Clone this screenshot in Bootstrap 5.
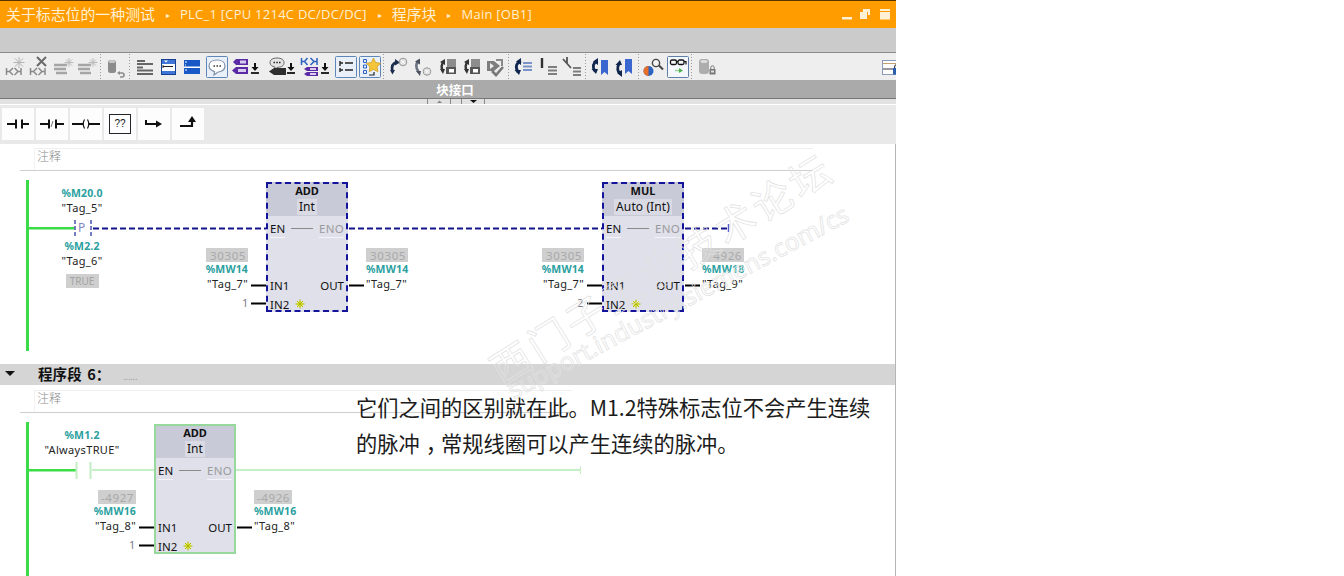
<!DOCTYPE html>
<html lang="zh-CN">
<head>
<meta charset="utf-8">
<title>关于标志位的一种测试</title>
<link href="https://cdn.jsdelivr.net/npm/bootstrap@5.3.0/dist/css/bootstrap.min.css" rel="stylesheet">
<style>
html,body{height:576px;overflow:hidden;background:#fff}
body{font-family:"Noto Sans","Noto Sans CJK SC",sans-serif;font-size:11px;color:#111}
.tia-app{width:896px;height:576px;overflow:hidden}
.tia-title{height:28px;background:#ff9c00;border-top:1px solid #5a3300;color:#fff0d6;padding-left:6px}
.tia-title .cn{font-family:"Noto Sans CJK SC",sans-serif;font-size:14.9px;white-space:nowrap}
.tia-title .en{font-family:"Open Sans",sans-serif;font-size:13px;white-space:nowrap;letter-spacing:.25px}
.tia-title .arr{font-size:8px;width:12px;text-align:center;margin:0 6px 0 7px}
.tia-winbtns{margin-right:5px}
.tia-gray{height:24px;background:#cbcbcb;border-bottom:1px solid #8a8a8a;box-sizing:content-box}
.tia-tools{height:27px;background:#eeeeee}
.tia-iface{height:18px;background:#aaaaaa;color:#fff;font:700 12.5px "Noto Sans CJK SC",sans-serif;padding-left:14px}
.tia-strip{height:7px;background:#e2e2e2;border-top:1px solid #777;border-bottom:1px solid #fff}
.tia-instr{height:39px;background:#e9e9e9;padding:3px 0 0 2px;gap:2px}
.tia-ibtn{width:32px;height:32px;background:#fdfdfd}
.tia-q{font:10px "Liberation Sans",sans-serif}
.tia-body{height:432px;border-right:1px solid #b5b5b5;background:#fff}
.tia-cmtrow{padding-left:20px}
.tia-cmt{border-bottom:1px solid #cfcfcf;height:23px;width:793px}
.tia-cmt2{width:552px;height:23px}
.tia-cmt span{display:block;margin-left:14px;height:22px;border-top:1px solid #efefef;border-left:1px solid #f3f3f3;padding:0 0 0 2px;font:300 12px/13px "Noto Sans CJK SC",sans-serif;color:#8a8a8a}
.tia-r1{height:27px;padding-top:4px}
.tia-r2{height:28px;padding-top:5px}
.tia-canvas{height:193px}
.tia-canvas2{height:163px}
.tia-wires{position:absolute;left:0;top:0}
.tia-head{height:21px;background:#d5d5d5;padding-left:6px;padding-bottom:2px}
.tia-head b{font:700 14.5px "Noto Sans CJK SC",sans-serif;margin-left:23px;word-spacing:2px;letter-spacing:.1px}
.tia-head i{color:#8c8c8c;font-style:normal;font-size:8px;margin-left:13px;letter-spacing:.2px;padding-top:6px}
.tia-tri{width:0;height:0;border-left:5.5px solid transparent;border-right:5.5px solid transparent;border-top:5.5px solid #111;margin-left:-1px}
.tia-node{position:absolute;white-space:nowrap;line-height:15px;font-size:11px;letter-spacing:.35px;color:#222}
.tia-opr{align-items:flex-start}
.tia-opl{align-items:flex-end}
.tia-val{width:42px;height:14px;background:#cfcfcf;color:#a9a9a9;text-align:right;padding-right:2px;line-height:15px;letter-spacing:.6px;font-size:11.5px}
.tia-val4{width:38px}
.tia-addr{color:#2aa0a0;font-weight:700;font-size:10.5px;letter-spacing:.15px;line-height:14px}
.tia-true{background:#cfcfcf;color:#a4a4a4;font-size:10px;width:33px;height:14px;text-align:center;line-height:14px;letter-spacing:0;margin-top:6px}
.tia-one{color:#7a7a86}
.tia-block{position:absolute;width:82px;height:130px;background:#dfe0ea;font-size:11.5px;line-height:15px;letter-spacing:0;color:#111}
.tia-sel{outline:2px dashed #14149a;outline-offset:-2px}
.tia-run{border:2px solid #97d99c}
.tia-run .tia-bhead{height:32px;padding-top:0}
.tia-bhead{height:34px;background:#c9cad7;padding-top:2px}
.tia-bname{font-weight:700;line-height:14px;font-size:11px}
.tia-btype{background:#d9dae3;padding:0 2px;height:16px;line-height:15px;margin-top:1px;font-size:12px;letter-spacing:.1px}
.tia-en{height:18px;padding:0 4px;margin-top:3px}
.tia-en span{border-bottom:1px solid #f4f4f8;height:19px;line-height:20px}
.tia-en .tia-eno{color:#9b9b9b;letter-spacing:.3px}
.tia-en hr{flex:1;margin:0 6px;border:0;border-top:1px solid #8a8a8a;opacity:1;height:0}
.tia-pins{padding:0 4px;height:19px;flex:none}
.tia-pins:last-child{margin-bottom:-1px;height:18px}
.tia-run .tia-en{padding:0 2px}
.tia-run .tia-pins{padding:0 2px}
.tia-run .tia-pins:last-child{margin-bottom:-3px}
.tia-star{margin-left:6px;margin-bottom:1px}
.tia-pct{position:absolute;left:356px;top:389px;font:400 21.25px/36px "Noto Sans CJK SC",sans-serif;color:#1c1c1c;white-space:nowrap}
.tia-cm{letter-spacing:-6px;padding-left:6px}
.tia-mark{position:absolute;white-space:nowrap;color:transparent;-webkit-text-stroke:.7px #e2e2e2;pointer-events:none}
.tia-m1{left:461px;top:244px;width:400px;text-align:center;font:40px/46px "Noto Sans CJK SC",sans-serif;letter-spacing:4px;transform:rotate(-32deg)}
.tia-m2{left:478px;top:287px;width:400px;text-align:center;font:24.5px/30px "Noto Sans",sans-serif;transform:rotate(-28deg)}
</style>
</head>
<body>
<svg width="0" height="0" class="position-absolute">
<defs>
<symbol id="k-star" viewBox="0 0 24 24"><path d="M16 2v11M10.500 7.500h11M12 3.500l8 8M20 3.500l-8 8" stroke="#b4b4b4" stroke-width="1" fill="none"/></symbol>
<symbol id="k-h" viewBox="0 0 24 24"><path d="M3.500 13v7M3.500 16.500h3M10 13l-3.500 3.500L10 20M18 13v7M18 16.500h-3M11.500 13l3.500 3.500-3.500 3.500" stroke="#8a8a8a" stroke-width="1.500" fill="none"/></symbol>
<symbol id="i-bars" viewBox="0 0 24 24"><path d="M3 10h13M3 14h12M5 18h11" stroke="#a5a5a5" stroke-width="2.500"/><path d="M18 3v9M13.500 7.500h9M15 4.500l6 6M21 4.500l-6 6" stroke="#bbb" stroke-width="1"/></symbol>
<symbol id="i-db" viewBox="0 0 24 24"><rect x="5" y="5" width="8" height="13" rx="2.500" fill="#8c8c8c"/><ellipse cx="9" cy="6.500" rx="3.500" ry="1.500" fill="#c8c8c8"/><path d="M15 18h4a2 2 0 0 1 0 4h-2" stroke="#8c8c8c" stroke-width="1.600" fill="none"/><path d="M17 16l-3 2 3 2z" fill="#8c8c8c"/></symbol>
<symbol id="i-list" viewBox="0 0 24 24"><path d="M4 6h8M4 9h16M4 12.500h6M4 15.500h16M4 19h16" stroke="#666" stroke-width="2"/></symbol>
<symbol id="i-ba" viewBox="0 0 24 24"><rect x="5.500" y="4.500" width="14" height="15" fill="#fff" stroke="#17418f"/><rect x="6" y="5" width="13" height="4" fill="#3f76d8"/><rect x="6" y="16" width="13" height="3" fill="#3f76d8"/><path d="M8 5.500l2 2 2-2z" fill="#fff"/><path d="M7 10v3M7 11.500h10" stroke="#222" fill="none"/></symbol>
<symbol id="i-bb" viewBox="0 0 24 24"><rect x="4" y="5" width="16" height="14" fill="#1757c6"/><rect x="4" y="11.500" width="16" height="1.500" fill="#fff"/><path d="M5 7h2M5 10h1M5 15h2" stroke="#fff" fill="none"/></symbol>
<symbol id="i-bub" viewBox="0 0 24 24"><path d="M12 5c5 0 8 2.500 8 6s-3 6-7 6l-4 3 .5-3.400C6 15.500 4 13.500 4 11c0-3.500 3-6 8-6z" fill="#fff" stroke="#7f8fa8" stroke-width="1.200"/><path d="M8.500 11h1.500M11.500 11H13M14.500 11H16" stroke="#333" stroke-width="1.600"/></symbol>
<symbol id="i-tag" viewBox="0 0 24 24"><path d="M8 4h12v6H8l-3-3z" fill="#5b2aa5"/><rect x="12" y="5.500" width="6" height="3" fill="#d8cdf0"/><path d="M8 12h12v7H8l-4-3.500z" fill="#5b2aa5"/><rect x="10" y="14" width="8" height="3" fill="#d8cdf0"/></symbol>
<symbol id="i-dl" viewBox="0 0 24 24"><path d="M12 7v5" stroke="#111" stroke-width="2"/><path d="M8.500 11h7L12 15z" fill="#111"/><path d="M8 17h8" stroke="#111" stroke-width="1.800"/></symbol>
<symbol id="i-bt" viewBox="0 0 24 24"><path d="M12 3c4.500 0 7 1.800 7 4.700 0 3-2.500 4.500-6 4.500l-3 2V12C7 11.500 5 10 5 7.700 5 4.800 7.500 3 12 3z" fill="#e4e4e4" stroke="#666"/><path d="M8.500 7.500h1.500M11.300 7.500h1.500M14 7.500h1.500" stroke="#222" stroke-width="1.500"/><path d="M9 13h12v7H9l-5-3.500z" fill="#2e2e2e"/></symbol>
<symbol id="i-kt" viewBox="0 0 24 24"><path d="M3.500 3v7M3.500 6.500h3M9.500 3l-3 3.500 3 3.500M19 3v7M19 6.500h-3M12.500 3l3.500 3.500-3.500 3.500" stroke="#2c62c0" stroke-width="1.500" fill="none"/><path d="M9 12h11v4H9l-3-2z" fill="#5b2aa5"/><path d="M9 17h11v4H9l-3-2z" fill="#5b2aa5"/><rect x="12" y="13" width="6" height="2" fill="#d8cdf0"/><rect x="12" y="18" width="6" height="2" fill="#d8cdf0"/></symbol>
<symbol id="i-lb" viewBox="0 0 24 24"><path d="M6 8h3M6 6v5M11 8h8M6 15h3M6 13v4M11 15h8" stroke="#222" fill="none" stroke-width="1.400"/></symbol>
<symbol id="i-sb" viewBox="0 0 24 24"><path d="M5.500 4.500h3v3h-3zM5.500 10h3v3h-3zM5.500 15.500h3v3h-3z" fill="none" stroke="#2c62c0"/><path d="M15.500 3l2.200 4.600 5 .7-3.600 3.500.8 5-4.400-2.300-4.400 2.300.8-5-3.600-3.500 5-.7z" fill="#f4c43a" stroke="#c69a20" stroke-width=".7"/><path d="M16 17v3h-5" fill="none" stroke="#222" stroke-width="1.200"/></symbol>
<symbol id="i-ca" viewBox="0 0 24 24"><path d="M11 7C7 8 5 11 6.500 17" stroke="#1c2c4c" stroke-width="2.600" fill="none"/><path d="M9 4l5 3.500-5 3zM4 15h5l-2.500 4.500z" fill="#1c2c4c"/><circle cx="17" cy="7" r="3.800" fill="#dcdcdc" stroke="#9a9a9a"/><path d="M15 5l4 4M19 5l-4 4" stroke="#fff"/></symbol>
<symbol id="i-cb" viewBox="0 0 24 24"><path d="M8 6C4.500 8 4.500 13 7.500 17" stroke="#6c7380" stroke-width="2.600" fill="none"/><path d="M9 3.500v6l-5-3zM5 16h5l-1 5z" fill="#4c5360"/><circle cx="16" cy="16.500" r="3.800" fill="#dcdcdc" stroke="#9a9a9a"/><path d="M14 14.500l4 4M18 14.500l-4 4" stroke="#fff"/></symbol>
<symbol id="i-cc" viewBox="0 0 24 24"><path d="M8 7C5 9 5 13 7 16" stroke="#333" stroke-width="2.400" fill="none"/><path d="M9 4v6L4 7zM4 14h5l-2 5z" fill="#333"/><rect x="11" y="4" width="9" height="8" fill="#8d8d8d"/><rect x="10" y="12" width="10" height="7" fill="#555"/><rect x="13" y="14" width="5" height="3.500" fill="#fff"/></symbol>
<symbol id="i-ss" viewBox="0 0 24 24"><path d="M4 6h7l6 5-6 5H4z" fill="#7d7d7d"/><path d="M7 8l4 3-4 3z" fill="#eee"/><path d="M13 5h6v6" stroke="#8a8a8a" stroke-width="2" fill="none"/><path d="M9 16l4 4 7-8" stroke="#777" stroke-width="2.600" fill="none"/></symbol>
<symbol id="i-cl" viewBox="0 0 24 24"><path d="M10 6C5 8 4 12 7 17" stroke="#10264e" stroke-width="2.800" fill="none"/><path d="M10 3v7L5 6.500zM3.500 15H10l-2 5z" fill="#10264e"/><path d="M12 8h9M12 11.500h9M12 15h9" stroke="#7a93c8" stroke-width="2"/></symbol>
<symbol id="i-il" viewBox="0 0 24 24"><path d="M6 3v10" stroke="#333" stroke-width="2.400"/><path d="M12 12h9M12 15.500h9M12 19h9" stroke="#7e7e7e" stroke-width="2"/></symbol>
<symbol id="i-xl" viewBox="0 0 24 24"><path d="M3 4l8 9M7 2v6" stroke="#555" stroke-width="1.800"/><path d="M13 13h8M13 16.500h8M13 20h8" stroke="#7e7e7e" stroke-width="2"/></symbol>
<symbol id="i-ml" viewBox="0 0 24 24"><path d="M9 6C5 8 4 12 7 16" stroke="#10264e" stroke-width="2.800" fill="none"/><path d="M10 3v7L5 6.500zM3.500 14H10l-2 5z" fill="#10264e"/><path d="M13 5h7v15l-3.500-3-3.500 3z" fill="#3a66cf"/></symbol>
<symbol id="i-mr" viewBox="0 0 24 24"><path d="M9 19C5 17 5 12 7 9" stroke="#10264e" stroke-width="2.800" fill="none"/><path d="M3.500 10H10L8 5zM10 22v-7L5 18z" fill="#10264e"/><path d="M13 4h7v15l-3.500-3-3.500 3z" fill="#3a66cf"/></symbol>
<symbol id="i-fd" viewBox="0 0 24 24"><circle cx="7.500" cy="16" r="5" fill="#2c62c0"/><path d="M7.500 11a5 5 0 0 0 0 10z" fill="#e8712a"/><circle cx="15" cy="8" r="3.600" fill="#f4f4f4" stroke="#444" stroke-width="1.400"/><path d="M18 10.500l4 4" stroke="#444" stroke-width="2"/></symbol>
<symbol id="i-gl" viewBox="0 0 24 24"><rect x="4.500" y="5" width="6" height="4.500" rx="1.500" fill="none" stroke="#111" stroke-width="1.300"/><rect x="12" y="5" width="6" height="4.500" rx="1.500" fill="none" stroke="#111" stroke-width="1.300"/><path d="M10.500 6.500H12M18 6.500h2v3" stroke="#111" fill="none" stroke-width="1.200"/><path d="M9 15.500h5" stroke="#8fd48f" stroke-width="1.400"/><path d="M13 13l4 2.500-4 2.500z" fill="#4cb04c"/></symbol>
<symbol id="i-dbl" viewBox="0 0 24 24"><rect x="4" y="4" width="10" height="15" rx="3" fill="#adadad"/><ellipse cx="9" cy="6.500" rx="4" ry="2" fill="#e0e0e0" stroke="#999" stroke-width=".6"/><rect x="14.500" y="14" width="6" height="5.500" fill="#777"/><path d="M15.800 14v-1.500a1.700 1.700 0 0 1 3.400 0V14" stroke="#777" fill="none"/><rect x="16" y="15.500" width="3" height="2" fill="#ddd"/></symbol>
<symbol id="i-win" viewBox="0 0 24 24"><rect x="2.500" y="5.500" width="21" height="14" fill="#fdfdfd" stroke="#8a9ab8"/><path d="M3 8.500h20" stroke="#c8a070"/><path d="M3 14h20" stroke="#334"/><circle cx="17" cy="12" r="2.500" fill="none" stroke="#222"/><rect x="13" y="13" width="9" height="6.500" fill="#2a5fb0"/></symbol>
<symbol id="y-star" viewBox="0 0 10 10"><circle cx="5" cy="5" r="3" fill="#f3f36a"/><path d="M5 .5v9M.5 5h9M2 2l6 6M8 2L2 8" stroke="#aab800" stroke-width="1"/></symbol>
</defs>
</svg>

<div class="tia-app position-relative d-flex flex-column">
  <div class="tia-title d-flex align-items-center">
    <span class="cn">关于标志位的一种测试</span><span class="arr">&#9656;</span>
    <span class="en">PLC_1 [CPU 1214C DC/DC/DC]</span><span class="arr">&#9656;</span>
    <span class="cn">程序块</span><span class="arr">&#9656;</span>
    <span class="en">Main [OB1]</span>
    <svg class="tia-winbtns ms-auto" width="54" height="12" viewBox="0 0 54 12">
      <rect x="5" y="8" width="10" height="2.500" fill="#fff0d6"/>
      <path d="M23 3h7v7h-7zM26 0h7v6h-2V3h-5z" fill="#fff0d6"/>
      <rect x="43" y="0" width="10" height="10.500" fill="#fff0d6"/><rect x="43" y="2" width="10" height="1" fill="#ff9c00"/>
    </svg>
  </div>
  <div class="tia-gray"></div>
  <div class="tia-tools d-flex">
    <svg width="896" height="27" viewBox="0 0 896 27">
      <path d="M100.500 1v25M129.500 1v25M383.500 1v25M508.500 1v25M585.500 1v25M638.500 1v25M691.500 1v25" stroke="#999" stroke-dasharray="1 2"/>
      <use href="#k-h" x="3" y="2" width="24" height="24"/><use href="#k-star" x="3" y="2" width="24" height="24"/>
      <use href="#k-h" x="27" y="2" width="24" height="24"/><path d="M37 4l9 9M46 4l-9 9" stroke="#6a6a6a" stroke-width="2"/>
      <use href="#i-bars" x="51" y="2" width="24" height="24"/>
      <use href="#i-bars" x="75" y="2" width="24" height="24"/>
      <use href="#i-db" x="103" y="2" width="24" height="24"/>
      <use href="#i-list" x="133" y="2" width="24" height="24"/>
      <use href="#i-ba" x="156" y="2" width="24" height="24"/>
      <use href="#i-bb" x="180" y="2" width="24" height="24"/>
      <rect x="206.500" y="3.500" width="21" height="21" rx="1" fill="#eaf0f9" stroke="#5f86b8"/>
      <use href="#i-bub" x="205" y="2" width="24" height="24"/>
      <use href="#i-tag" x="228" y="2" width="24" height="24"/><use href="#i-dl" x="243" y="3" width="24" height="24"/>
      <use href="#i-bt" x="265" y="2" width="24" height="24"/><use href="#i-dl" x="279" y="3" width="24" height="24"/>
      <use href="#i-kt" x="298" y="2" width="24" height="24"/><use href="#i-dl" x="313" y="3" width="24" height="24"/>
      <rect x="335.500" y="3.500" width="21" height="21" rx="1" fill="#eaf0f9" stroke="#5f86b8"/>
      <use href="#i-lb" x="334" y="2" width="24" height="24"/>
      <rect x="359.500" y="3.500" width="21" height="21" rx="1" fill="#eaf0f9" stroke="#5f86b8"/>
      <use href="#i-sb" x="358" y="2" width="24" height="24"/>
      <use href="#i-ca" x="386" y="2" width="24" height="24"/>
      <use href="#i-cb" x="411" y="2" width="24" height="24"/>
      <use href="#i-cc" x="436" y="2" width="24" height="24"/>
      <use href="#i-cc" x="460" y="2" width="24" height="24"/>
      <use href="#i-ss" x="483" y="2" width="24" height="24"/>
      <use href="#i-cl" x="511" y="2" width="24" height="24"/>
      <use href="#i-il" x="536" y="2" width="24" height="24"/>
      <use href="#i-xl" x="560" y="2" width="24" height="24"/>
      <use href="#i-ml" x="588" y="2" width="24" height="24"/>
      <use href="#i-mr" x="612" y="2" width="24" height="24"/>
      <use href="#i-fd" x="641" y="2" width="24" height="24"/>
      <rect x="667.500" y="3.500" width="21" height="21" rx="1" fill="#f4f7fb" stroke="#5f7ea8"/>
      <use href="#i-gl" x="666" y="2" width="24" height="24"/>
      <use href="#i-dbl" x="695" y="2" width="24" height="24"/>
      <use href="#i-win" x="880" y="2" width="24" height="24"/>
    </svg>
  </div>
  <div class="tia-iface d-flex align-items-center justify-content-center">块接口</div>
  <div class="tia-strip d-flex">
    <svg width="896" height="5" viewBox="0 0 896 5">
      <path d="M427.500 0v5M450.500 0v5M461.500 0v5M484.500 0v5" stroke="#888"/>
      <path d="M437 4l2.500-2.500L442 4z" fill="#888"/><path d="M470 1h7l-3.500 3z" fill="#111"/>
    </svg>
  </div>
  <div class="tia-instr d-flex">
    <div class="tia-ibtn d-flex align-items-center justify-content-center"><svg width="24" height="12" viewBox="0 0 24 12"><path d="M1 6h9M10 1.500v9M16 1.500v9M16 6h7" stroke="#111" stroke-width="2" fill="none"/></svg></div>
    <div class="tia-ibtn d-flex align-items-center justify-content-center"><svg width="26" height="12" viewBox="0 0 26 12"><path d="M1 6h9M10 1.500v9M17 1.500v9M17 6h8" stroke="#111" stroke-width="2" fill="none"/><path d="M12 9l2-6" stroke="#777"/></svg></div>
    <div class="tia-ibtn d-flex align-items-center justify-content-center"><svg width="30" height="12" viewBox="0 0 30 12"><path d="M1 6h11M18 6h11" stroke="#111" stroke-width="2"/><path d="M13.500 1.500q-2.500 4.500 0 9M16.500 1.500q2.500 4.500 0 9" stroke="#111" fill="none" stroke-width="1.200"/></svg></div>
    <div class="tia-ibtn d-flex align-items-center justify-content-center position-relative"><span class="tia-q border border-dark px-1 lh-1 py-1">??</span></div>
    <div class="tia-ibtn d-flex align-items-center justify-content-center"><svg width="18" height="10" viewBox="0 0 18 10"><path d="M1 1v4h11" stroke="#111" stroke-width="2" fill="none"/><path d="M11 1.500L17 5l-6 3.500z" fill="#111"/></svg></div>
    <div class="tia-ibtn d-flex align-items-center justify-content-center pb-1"><svg width="18" height="14" viewBox="0 0 18 14"><path d="M1 11h12V6" stroke="#111" stroke-width="2.200" fill="none"/><path d="M9 7l4-6 4 6z" fill="#111"/></svg></div>
  </div>

  <div class="tia-body">
    <div class="tia-cmtrow tia-r1"><div class="tia-cmt"><span>注释</span></div></div>
    <div class="tia-canvas position-relative">
      <svg class="tia-wires" width="895" height="193" viewBox="0 0 895 193">
        <rect x="26" y="9" width="3" height="171" fill="#3bdc47"/>
        <rect x="28" y="56" width="47" height="2.500" fill="#3bdc47"/>
        <path d="M75 49v17M91 49v17" stroke="#6870bb" stroke-width="1.800" stroke-dasharray="4 2"/>
        <path d="M93 57.500h173M349 57.500h253M685 57.500h43" stroke="#14148c" stroke-width="2" stroke-dasharray="6 3" fill="none"/>
        <path d="M728.500 53v8" stroke="#5a5ac8" stroke-width="1.500"/>
        <path d="M251 114.500h15M251 132.500h15M349 114.500h15M587 114.500h15M587 132.500h15M685 114.500h15" stroke="#000" stroke-width="2"/>
      </svg>
      <div class="tia-node d-flex flex-column align-items-center" style="left:52px;top:15px;width:60px">
        <span class="tia-addr">%M20.0</span><span>"Tag_5"</span>
      </div>
      <div class="tia-node" style="left:78px;top:49px;color:#7f86c8;font-size:12px">P</div>
      <div class="tia-node d-flex flex-column align-items-center" style="left:52px;top:68px;width:60px">
        <span class="tia-addr">%M2.2</span><span>"Tag_6"</span><span class="tia-true">TRUE</span>
      </div>

      <div class="tia-node d-flex flex-column tia-opl" style="left:190px;top:77px;width:58px">
        <span class="tia-val">30305</span><span class="tia-addr">%MW14</span><span>"Tag_7"</span>
      </div>
      <div class="tia-node tia-one" style="left:242px;top:124px">1</div>
      <div class="tia-block tia-sel d-flex flex-column" style="left:266px;top:11px">
        <div class="tia-bhead d-flex flex-column align-items-center"><span class="tia-bname">ADD</span><span class="tia-btype">Int</span></div>
        <div class="tia-en d-flex align-items-center"><span>EN</span><hr><span class="tia-eno">ENO</span></div>
        <div class="flex-grow-1"></div>
        <div class="tia-pins d-flex align-items-center justify-content-between"><span>IN1</span><span>OUT</span></div>
        <div class="tia-pins d-flex align-items-center"><span>IN2</span><svg class="tia-star" width="10" height="10"><use href="#y-star" width="10" height="10"/></svg></div>
      </div>
      <div class="tia-node d-flex flex-column tia-opr" style="left:366px;top:77px;width:58px">
        <span class="tia-val">30305</span><span class="tia-addr">%MW14</span><span>"Tag_7"</span>
      </div>

      <div class="tia-node d-flex flex-column tia-opl" style="left:526px;top:77px;width:58px">
        <span class="tia-val">30305</span><span class="tia-addr">%MW14</span><span>"Tag_7"</span>
      </div>
      <div class="tia-node tia-one" style="left:577px;top:124px">2</div>
      <div class="tia-block tia-sel d-flex flex-column" style="left:602px;top:11px">
        <div class="tia-bhead d-flex flex-column align-items-center"><span class="tia-bname">MUL</span><span class="tia-btype">Auto (Int)</span></div>
        <div class="tia-en d-flex align-items-center"><span>EN</span><hr><span class="tia-eno">ENO</span></div>
        <div class="flex-grow-1"></div>
        <div class="tia-pins d-flex align-items-center justify-content-between"><span>IN1</span><span>OUT</span></div>
        <div class="tia-pins d-flex align-items-center"><span>IN2</span><svg class="tia-star" width="10" height="10"><use href="#y-star" width="10" height="10"/></svg></div>
      </div>
      <div class="tia-node d-flex flex-column tia-opr" style="left:702px;top:77px;width:58px">
        <span class="tia-val">4926</span><span class="tia-addr">%MW18</span><span>"Tag_9"</span>
      </div>
    </div>

    <div class="tia-head d-flex align-items-center"><span class="tia-tri"></span><b>程序段 6：</b><i>......</i></div>
    <div class="tia-cmtrow tia-r2"><div class="tia-cmt tia-cmt2"><span>注释</span></div></div>
    <div class="tia-canvas2 position-relative">
      <svg class="tia-wires" width="895" height="163" viewBox="0 0 895 163">
        <rect x="26" y="9" width="3" height="154" fill="#3bdc47"/>
        <rect x="28" y="56" width="48" height="2.500" fill="#3bdc47"/>
        <path d="M76.500 49v17M90.500 49v17" stroke="#c3edc3" stroke-width="2"/>
        <path d="M92 57h62M236 57h344" stroke="#c5efc5" stroke-width="2"/>
        <path d="M580.500 53v8" stroke="#c5efc5"/>
        <path d="M139 114.500h15M139 132.500h15M237 114.500h15" stroke="#000" stroke-width="2"/>
      </svg>
      <div class="tia-node d-flex flex-column align-items-center" style="left:32px;top:15px;width:100px">
        <span class="tia-addr">%M1.2</span><span>"AlwaysTRUE"</span>
      </div>
      <div class="tia-node d-flex flex-column tia-opl" style="left:78px;top:77px;width:58px">
        <span class="tia-val tia-val4">-4927</span><span class="tia-addr">%MW16</span><span>"Tag_8"</span>
      </div>
      <div class="tia-node tia-one" style="left:129px;top:124px">1</div>
      <div class="tia-block tia-run d-flex flex-column" style="left:154px;top:11px">
        <div class="tia-bhead d-flex flex-column align-items-center"><span class="tia-bname">ADD</span><span class="tia-btype">Int</span></div>
        <div class="tia-en d-flex align-items-center"><span>EN</span><hr><span class="tia-eno">ENO</span></div>
        <div class="flex-grow-1"></div>
        <div class="tia-pins d-flex align-items-center justify-content-between"><span>IN1</span><span>OUT</span></div>
        <div class="tia-pins d-flex align-items-center"><span>IN2</span><svg class="tia-star" width="10" height="10"><use href="#y-star" width="10" height="10"/></svg></div>
      </div>
      <div class="tia-node d-flex flex-column tia-opr" style="left:254px;top:77px;width:58px">
        <span class="tia-val tia-val4">-4926</span><span class="tia-addr">%MW16</span><span>"Tag_8"</span>
      </div>
    </div>
  </div>
  <div class="tia-mark tia-m1">西门子工业技术论坛</div>
  <div class="tia-mark tia-m2">support.industry.siemens.com/cs</div>
  <div class="tia-pct">它们之间的区别就在此。M1.2特殊标志位不会产生连续<br>的脉冲<span class="tia-cm">，</span>常规线圈可以产生连续的脉冲。</div>
</div>
<script src="https://cdn.jsdelivr.net/npm/bootstrap@5.3.0/dist/js/bootstrap.bundle.min.js"></script>
</body>
</html>
